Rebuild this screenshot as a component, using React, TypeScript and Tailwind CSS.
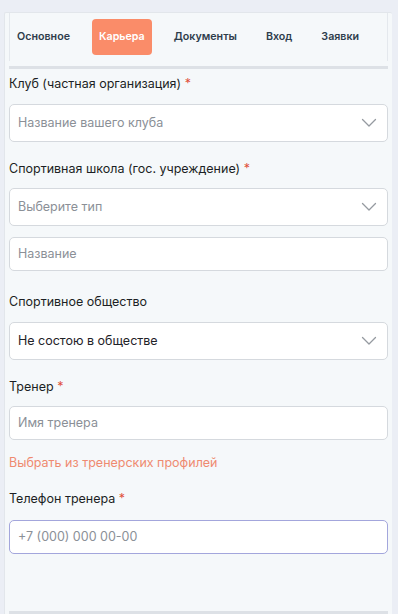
const tabs = ['Основное', 'Карьера', 'Документы', 'Вход', 'Заявки'];

function Label({ text, required, className }: { text: string; required?: boolean; className?: string }) {
  return (
    <div className={`text-[12.5px] leading-5 text-[#1c1f24] ${className ?? ''}`}>
      {text}
      {required && <span className="text-[#e0503a]"> *</span>}
    </div>
  );
}

function Chevron() {
  return (
    <svg width="16" height="10" viewBox="0 0 16 10" fill="none" className="text-[#959aa0]">
      <path d="M1.5 1.5 8 8 14.5 1.5" stroke="currentColor" strokeWidth="1.3" strokeLinecap="round" strokeLinejoin="round" />
    </svg>
  );
}

function Select({ value, placeholder, className }: { value?: string; placeholder: string; className?: string }) {
  return (
    <div
      className={`flex h-[38px] items-center justify-between rounded-[5px] border border-[#d5d9de] bg-white pl-[8px] pr-[10px] text-[12.5px] ${className ?? ''}`}
    >
      <span className={value ? 'text-[#1f2328]' : 'text-[#8b9097]'}>{value ?? placeholder}</span>
      <Chevron />
    </div>
  );
}

function Input({ placeholder, focused, className }: { placeholder: string; focused?: boolean; className?: string }) {
  return (
    <div
      className={`flex h-[34px] items-center rounded-[5px] border bg-white pl-[8px] text-[12.5px] text-[#8b9097] ${
        focused ? 'border-[#a3a6dc]' : 'border-[#d5d9de]'
      } ${className ?? ''}`}
    >
      {placeholder}
    </div>
  );
}

export default function App() {
  return (
    <div className="min-h-[614px] bg-[#ebeef5] pl-1 pt-3 font-['Inter',sans-serif]">
      <div className="h-[602px] w-[388px] rounded-t-[2px] border-l border-t border-[#e2e6eb] bg-[#f5f8fa] px-1">
        <div className="flex h-12 items-center gap-[15px] border-x border-[#e4e8ed]">
          {tabs.map((t) => (
            <div
              key={t}
              className={`flex h-9 items-center rounded-[4px] px-[7px] text-[10.7px] font-semibold ${
                t === 'Карьера' ? 'bg-[#fa8c69] px-2 text-white' : 'text-[#2e3d4c]'
              }`}
            >
              {t}
            </div>
          ))}
        </div>
        <div className="mt-[5px] h-[3px] bg-[#dde1e6]" />

        <Label text="Клуб (частная организация)" required className="mt-[5px]" />
        <Select placeholder="Название вашего клуба" className="mt-[10px]" />

        <Label text="Спортивная школа (гос. учреждение)" required className="mt-[17px]" />
        <Select placeholder="Выберите тип" className="mt-[9px]" />
        <Input placeholder="Название" className="mt-[11px]" />

        <Label text="Спортивное общество" className="mt-[21px]" />
        <Select value="Не состою в обществе" placeholder="" className="mt-[10px]" />

        <Label text="Тренер" required className="mt-[17px]" />
        <Input placeholder="Имя тренера" className="mt-[9px]" />
        <div className="mt-[13px] text-[12.5px] leading-5 text-[#ef8a70]">Выбрать из тренерских профилей</div>

        <Label text="Телефон тренера" required className="mt-[16px]" />
        <Input placeholder="+7 (000) 000 00-00" focused className="mt-[11px]" />

        <div className="mt-[57px] h-[3px] bg-[#dde1e6]" />
      </div>
    </div>
  );
}
